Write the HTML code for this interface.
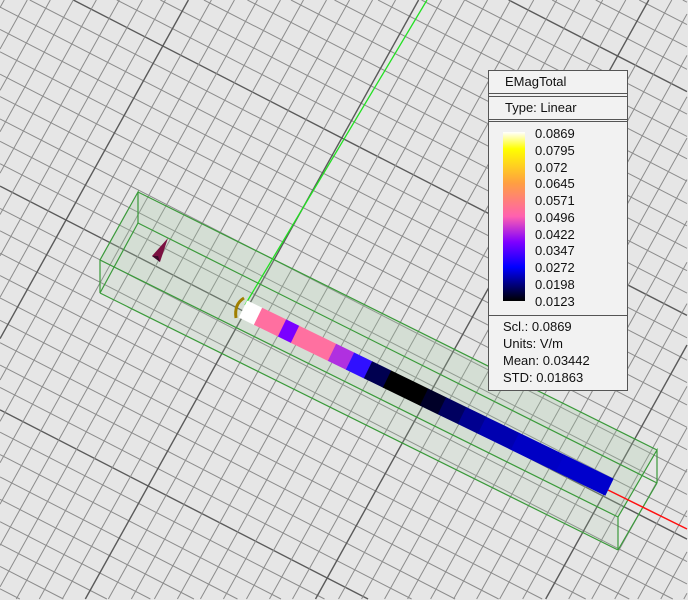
<!DOCTYPE html>
<html><head><meta charset="utf-8"><style>
html,body{margin:0;padding:0;width:688px;height:600px;overflow:hidden;background:#e6e6e6;position:relative}
svg{position:absolute;left:0;top:0;display:block;overflow:hidden}
.leg{position:absolute;left:488px;top:70px;width:138px;height:319px;background:#f2f2f2;border:1px solid #555;font-family:"Liberation Sans",sans-serif;font-size:13px;color:#111;overflow:hidden}
.row{position:absolute;left:0;right:0;border-bottom:1px solid #555}
.lbl{position:absolute;left:46px;line-height:16px}
</style></head><body>
<svg id="s" width="688" height="600" viewBox="0 0 688 600"></svg>
<script>
var s=document.getElementById('s'),h='';
var O=[245,312],a=[17.9,9.2],b=[9.68,-17.4];
function P(u,v){return [O[0]+u*a[0]+v*b[0],O[1]+u*a[1]+v*b[1]];}
function clip(p,q){var t0=0,t1=1,dx=q[0]-p[0],dy=q[1]-p[1];
var P_=[-dx,dx,-dy,dy],Q=[p[0]-0,687-p[0],p[1]-0,599-p[1]];
for(var i=0;i<4;i++){if(P_[i]==0){if(Q[i]<0)return null;}else{var r=Q[i]/P_[i];if(P_[i]<0){if(r>t1)return null;if(r>t0)t0=r;}else{if(r<t0)return null;if(r<t1)t1=r;}}}
return [[p[0]+t0*dx,p[1]+t0*dy],[p[0]+t1*dx,p[1]+t1*dy]];}
function L(p,q,st){var c=clip(p,q);if(!c)return;h+='<line x1="'+c[0][0]+'" y1="'+c[0][1]+'" x2="'+c[1][0]+'" y2="'+c[1][1]+'" '+st+'/>';}
for(var v=-40;v<=40;v++){var m=(v%10==0);L(P(-60,v),P(60,v),'stroke="'+(m?'#5a5a5a':'#8c8c8c')+'" stroke-width="'+(m?1.4:1)+'"');}
for(var u=-40;u<=40;u++){var m=(u%10==0);L(P(u,-60),P(u,60),'stroke="'+(m?'#5a5a5a':'#8c8c8c')+'" stroke-width="'+(m?1.4:1)+'"');}
h+='<polygon points="100,260 138,192 657,450 618,517" fill="rgba(160,200,160,0.25)"/>';
h+='<polygon points="100,260 618,517 618,550 100,293" fill="rgba(160,200,160,0.15)"/>';
var G='stroke="#3a9a3a" stroke-width="1.2" fill="none"';
h+='<polyline points="100,293 100,260 138,192 138,223" '+G+'/>';
h+='<polyline points="618,550 618,517 657,450 657,483" '+G+'/>';
h+='<line x1="100" y1="260" x2="618" y2="517" '+G+'/><line x1="100" y1="293" x2="618" y2="550" '+G+'/>';
h+='<line x1="138" y1="192" x2="657" y2="450" '+G+'/><line x1="138" y1="223" x2="657" y2="483" '+G+'/>';
h+='<line x1="100" y1="293" x2="138" y2="223" '+G+'/><line x1="618" y1="550" x2="657" y2="483" '+G+'/>';
h+='<line x1="245" y1="305" x2="427" y2="0" stroke="#22e022" stroke-width="1.3"/>';
h+='<line x1="608" y1="490" x2="687" y2="529" stroke="#ff1010" stroke-width="1.5"/>';
var S=[243,309],E=[609,487],segs=[[236,'#ffffff'],[258,'#ff6fa0'],[282,'#7a00ff'],[295,'#ff70a0'],[332,'#b030e0'],[350,'#3010ff'],[368,'#000050'],[387,'#000000'],[424,'#000028'],[442,'#000060'],[462,'#000090'],[482,'#0000b0'],[515,'#0000c4'],[560,'#0000cc'],[612,'']];
var f=function(x){return S[1]+(x-S[0])*(E[1]-S[1])/(E[0]-S[0]);};
for(var i=0;i<segs.length-1;i++){var x1=Math.max(segs[i][0],S[0]),x2=Math.min(segs[i+1][0],E[0]);
h+='<line x1="'+x1+'" y1="'+f(x1)+'" x2="'+(x2+0.5)+'" y2="'+f(x2+0.5)+'" stroke="'+segs[i][1]+'" stroke-width="19"/>';}
h+='<path d="M236 318 Q234 304 244 298" stroke="#a08000" stroke-width="3" fill="none"/>';
h+='<polygon points="168,238 152,256 160,262" fill="#7a1040"/><polygon points="152,256 160,262 158,256" fill="#3a0828"/>';
s.innerHTML=h;
</script>
<div class="leg">
<div class="row" style="top:0;height:22px;"><span style="position:absolute;left:16px;top:3px">EMagTotal</span></div>
<div class="row" style="top:25px;height:22px;border-top:1px solid #555"><span style="position:absolute;left:16px;top:3px">Type: Linear</span></div>
<div class="row" style="top:50px;height:193px;border-top:1px solid #555">
<div style="position:absolute;left:14px;top:10px;width:22px;height:169px;background:linear-gradient(#ffffff,#ffff00 10%,#ffa040 30%,#ff60b0 50%,#8000ff 65%,#0000ff 80%,#000000)"></div>
<div class="lbl" style="top:4px">0.0869</div><div class="lbl" style="top:21px">0.0795</div><div class="lbl" style="top:38px">0.072</div><div class="lbl" style="top:54px">0.0645</div><div class="lbl" style="top:71px">0.0571</div><div class="lbl" style="top:88px">0.0496</div><div class="lbl" style="top:105px">0.0422</div><div class="lbl" style="top:121px">0.0347</div><div class="lbl" style="top:138px">0.0272</div><div class="lbl" style="top:155px">0.0198</div><div class="lbl" style="top:172px">0.0123</div>
</div>
<div style="position:absolute;left:14px;top:247px;line-height:17px">Scl.: 0.0869<br>Units: V/m<br>Mean: 0.03442<br>STD: 0.01863</div>
</div>
</body></html>
